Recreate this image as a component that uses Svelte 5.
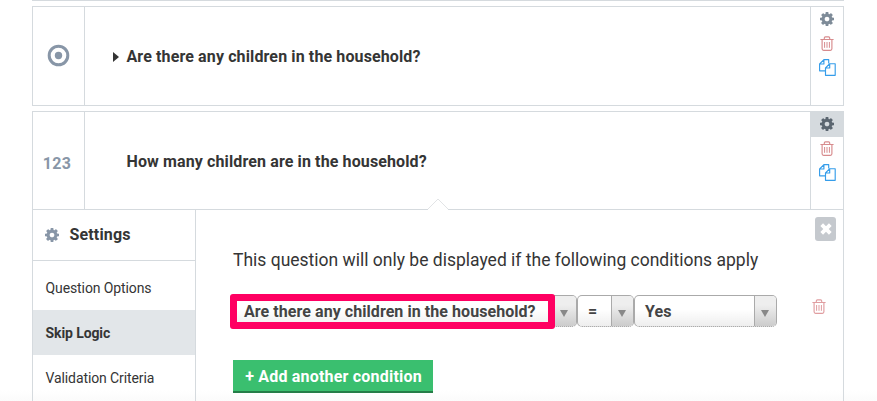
<script>
  const tabs = [
    { label: 'Question Options' },
    { label: 'Skip Logic', active: true },
    { label: 'Validation Criteria' }
  ];
  const conditions = [
    { value: 'Are there any children in the household?', kind: 'question' },
    { value: '=', kind: 'operator' },
    { value: 'Yes', kind: 'answer' }
  ];
</script>

{#snippet cog()}
  <svg class="cog" viewBox="0 128 1536 1536"><path fill="currentColor" fill-rule="evenodd" d="M1024 896q0 106-75 181t-181 75-181-75-75-181 75-181 181-75 181 75 75 181zm512-109v222q0 12-8 23t-20 13l-185 28q-19 54-39 91 35 50 107 138 10 12 10 25t-9 23q-27 37-99 108t-94 71q-12 0-26-9l-138-108q-44 23-91 38-16 136-29 186-7 28-36 28h-222q-14 0-24.5-8.5t-11.5-21.5l-28-184q-49-16-90-37l-141 107q-10 9-25 9-14 0-25-11-126-114-165-168-7-10-7-23 0-12 8-23 15-21 51-66.5t54-70.5q-27-50-41-99l-183-27q-13-2-21-12.5t-8-23.5v-222q0-12 8-23t19-13l186-28q14-46 39-92-40-57-107-138-10-12-10-24 0-10 9-23 26-36 98.500-107.500t94.500-71.500q13 0 26 10l138 107q44-23 91-38 16-136 29-186 7-28 36-28h222q14 0 24.500 8.500t11.500 21.500l28 184q49 16 90 37l142-107q9-9 24-9 13 0 25 10 129 119 165 170 7 8 7 22 0 12-8 23-15 21-51 66.500t-54 70.500q26 50 41 98l183 28q13 2 21 12.500t8 23.500z" /></svg>
{/snippet}

{#snippet trash()}
  <svg class="trash" width="14" height="15" viewBox="0 0 14 15" fill="none" stroke="currentColor">
    <path d="M.4 3.5H13.6M4.300 3.300V2Q4.300.9 5.400.9H8.600Q9.700.9 9.700 2V3.300M2.100 3.500V12.800Q2.100 14.300 3.600 14.300H10.400Q11.900 14.300 11.900 12.800V3.500" stroke-width="1.150" />
    <path d="M4.600 6V11.800M7 6V11.800M9.400 6V11.800" stroke-width="1" />
  </svg>
{/snippet}

{#snippet actions(open)}
  <div class="actions">
    <div class="act" class:open>{@render cog()}</div>
    <div class="del">{@render trash()}</div>
    <svg class="copy" width="17" height="17" viewBox="0 0 17 17" fill="none" stroke="currentColor" stroke-width="1.150" stroke-linejoin="round">
      <path d="M6.300 11.800H.6V5L4.900.6H9.700V4.600M.6 5H4.900V.6" />
      <path d="M6.500 9 10.700 4.700H16.200V16.300H6.500ZM6.500 9H10.700V4.700" />
    </svg>
  </div>
{/snippet}

<main>
  <div class="previous"></div>
  <section class="card first">
    <div class="row">
      <div class="type">
        <svg width="23" height="23" viewBox="0 0 23 23"><circle cx="11.500" cy="11.500" r="9.300" fill="none" stroke="#8896a7" stroke-width="3" /><circle cx="11.500" cy="11.500" r="3.700" fill="#8896a7" /></svg>
      </div>
      <div class="question"><span class="caret"></span><span class="title">Are there any children in the household?</span></div>
      {@render actions(false)}
    </div>
  </section>

  <section class="card second">
    <div class="row">
      <div class="type">123</div>
      <div class="question"><span class="title">How many children are in the household?</span></div>
      {@render actions(true)}
    </div>
    <div class="settings">
      <svg class="pointer" width="22" height="12" viewBox="0 0 22 12"><path d="M1 12V11L11 1 21 11V12Z" fill="#fff" /><path d="M1 11 11 1 21 11" fill="none" stroke="#e2e4e6" /></svg>
      <nav>
        <h2>{@render cog()}<span>Settings</span></h2>
        {#each tabs as tab}
          <div class="tab" class:active={tab.active}><span>{tab.label}</span></div>
        {/each}
      </nav>
      <div class="panel">
        <button class="close" aria-label="Close"><svg width="12" height="12" viewBox="0 0 12 12"><path d="M1.700 1.700 10.300 10.300M10.300 1.700 1.700 10.300" stroke="#fff" stroke-width="3.800" /></svg></button>
        <p><span>This question will only be displayed if the following conditions apply</span></p>
        <div class="conditions">
          {#each conditions as c}
            <div class="select {c.kind}"><span class="value"><span>{c.value}</span></span><i></i></div>
          {/each}
          <div class="remove">{@render trash()}</div>
          <div class="highlight"></div>
        </div>
        <button class="add"><span>+ Add another condition</span></button>
      </div>
    </div>
  </section>
</main>

<style>
  :global(body) { overflow: hidden; }
  * { box-sizing: border-box; }
  main {
    height: 401px; width: 877px; overflow: hidden; padding-left: 32px;
    background: linear-gradient(#fff 390px, #fbfbfb);
    font: 500 16px/20px Roboto, sans-serif; color: #353535;
  }
  svg { display: block; flex: none; }
  button { border: 0; padding: 0; font: inherit; }
  .previous { width: 812px; height: 1px; background: #d5dade; }
  .card { width: 812px; border: 1px solid #d5dade; }
  .first { margin-top: 5px; height: 100px; }
  .second { margin-top: 5px; height: 330px; }
  .row { display: flex; height: 98px; }
  .second .row { height: 97px; }
  .type {
    width: 52px; border-right: 1px solid #d5dade; flex: none;
    display: flex; align-items: center; justify-content: center;
    color: #8896a7; font-weight: 700; letter-spacing: .3px;
  }
  .first .type { padding-bottom: 2px; }
  .second .type { padding: 7px 3px 0 0; }
  .question { flex: 1; display: flex; align-items: center; padding: 1px 0 0 28px; }
  .second .question { padding: 2px 0 0 41.500px; }
  .caret { width: 0; height: 0; border: solid transparent; border-width: 5.500px 0 5.500px 6px; border-left-color: #353535; margin-right: 7.500px; }
  .title { font-weight: 700; letter-spacing: .12px; }
  .actions { width: 33px; border-left: 1px solid #d5dade; flex: none; display: flex; flex-direction: column; align-items: center; }
  .act { width: 32px; height: 25px; display: flex; justify-content: center; padding-top: 5px; color: #7e8b98; }
  .act.open { background: #d5dade; color: #5b6670; }
  .cog { width: 14px; height: 14px; }
  .del { margin-top: 4px; color: #d78b8d; }
  .copy { margin-top: 8px; color: #359dea; }

  .settings { display: flex; position: relative; border-top: 1px solid #d5dade; height: 231px; }
  .pointer { position: absolute; left: 394px; top: -12px; }
  nav { width: 163px; border-right: 1px solid #d5dade; flex: none; }
  h2 { margin: 0; height: 51px; border-bottom: 1px solid #d5dade; display: flex; align-items: center; gap: 10.500px; padding-left: 12px; font: 700 16px/20px Roboto, sans-serif; letter-spacing: .15px; }
  h2 .cog { color: #8896a7; }
  .tab { height: 45px; padding: 1px 0 0 12.500px; display: flex; align-items: center; font-size: 14px; font-weight: 400; letter-spacing: -.1px; }
  .tab:nth-of-type(1) { height: 49px; padding-top: 5px; }
  .tab.active { background: #e2e6e9; font-weight: 700; }
  .panel { flex: 1; position: relative; padding: 40px 0 0 37px; }
  .close { position: absolute; right: 7px; top: 7px; width: 21px; height: 24px; border-radius: 3px; background: #c5c9ce; display: grid; place-items: center; }
  p { margin: 0; font-size: 17.500px; line-height: 21px; font-weight: 400; height: 45px; }
  .conditions { display: flex; position: relative; height: 32px; }
  .select { display: flex; height: 32px; border: 1px solid #aaa; border-bottom: 1px dotted #888; border-radius: 5px; overflow: hidden; background: linear-gradient(#fff 45%, #eee); font-weight: 700; color: #444; }
  .value { flex: 1; padding: 6px 0 0 10px; white-space: nowrap; letter-spacing: .06px; }
  .question.select { flex: none; width: 344px; padding: 0; align-items: stretch; }
  .operator { width: 57px; }
  .answer { width: 143px; }
  .select i { width: 22px; border-left: 1px solid #aaa; background: linear-gradient(#eee 30%, #ccc); display: flex; justify-content: center; align-items: center; padding: 4px 1px 0 0; }
  .question.select i { padding-right: 3px; }
  .select i::after { content: ""; border: solid transparent; border-width: 7px 4px 0; border-top-color: #888; }
  .highlight { position: absolute; left: -3px; top: -1px; width: 325px; height: 35px; border: 7px solid #ff0062; border-radius: 3px; }
  .remove { margin: 4px 0 0 35px; color: #e09da0; }
  .add { display: flex; align-items: center; justify-content: center; margin-top: 33px; width: 200px; height: 33px; background: #3abf6f; border-bottom: 2px solid #257d48; color: #fff; font-weight: 700; letter-spacing: .2px; padding: 2px 0 0 1px; }
</style>
